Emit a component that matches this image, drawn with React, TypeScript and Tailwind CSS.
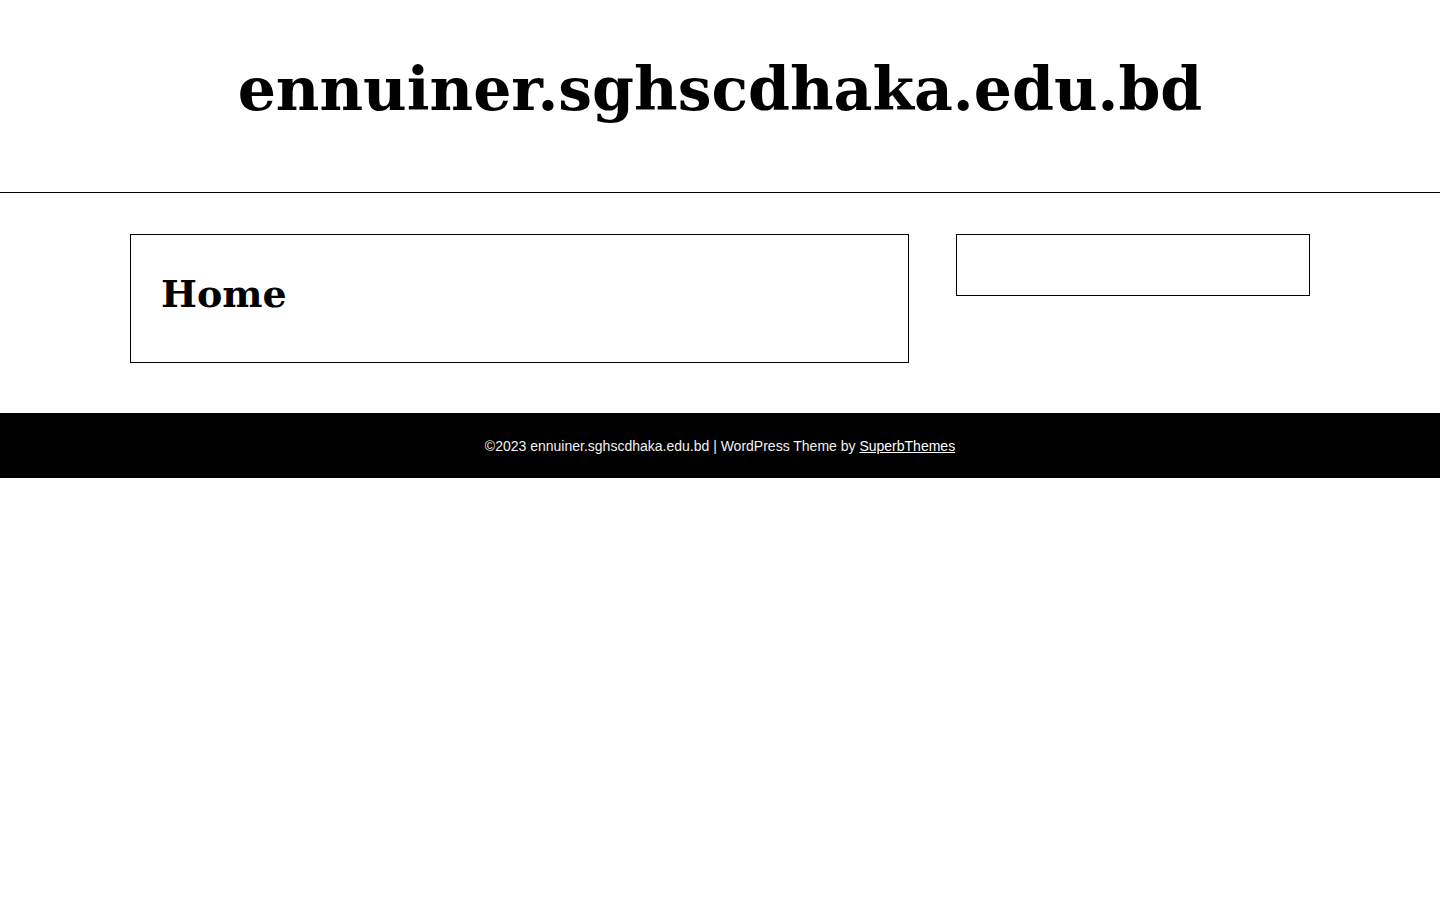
import React from 'react';

const serif = "font-['DejaVu_Serif',serif]";

const App: React.FC = () => {
  return (
    <div className="min-h-screen bg-white text-black">
      {/* Header */}
      <header className="border-b border-black pt-[54px] pb-[68px] text-center">
        <h1 className={`${serif} text-[60px] font-bold leading-[70px]`}>
          ennuiner.sghscdhaka.edu.bd
        </h1>
      </header>

      {/* Content */}
      <div className="mx-auto flex w-[1180px] justify-between pt-[41px] pb-[50px]">
        <main className="w-[779px] self-start border border-black pr-[31px] pl-[30px] pt-[37px] pb-[46px]">
          <h2 className={`${serif} text-[38px] font-bold leading-[44px]`}>Home</h2>
        </main>
        <aside className="h-[62px] w-[354px] self-start border border-black" />
      </div>

      {/* Footer */}
      <footer className="bg-black pt-[25px] pb-[23px] text-center font-['Liberation_Sans',Arial,sans-serif] text-[14px] leading-[17px] text-[#f2f2f2]">
        ©2023 ennuiner.sghscdhaka.edu.bd | WordPress Theme by{' '}
        <a href="#" className="text-white underline">
          SuperbThemes
        </a>
      </footer>
    </div>
  );
};

export default App;
